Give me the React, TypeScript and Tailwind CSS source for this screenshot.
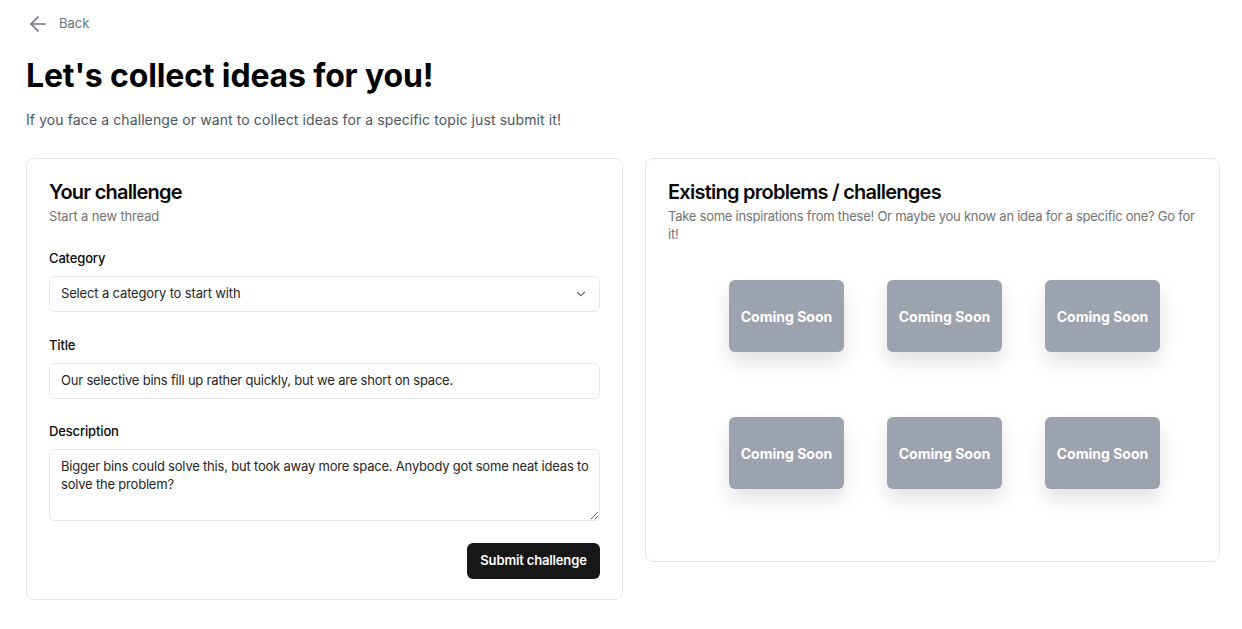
import React from "react";

function Tile() {
  return (
    <div className="flex h-[72px] w-[115px] items-center justify-center rounded-md bg-[#9ca3af] shadow-[0_10px_20px_rgba(0,0,0,0.12)]">
      <span className="text-[14px] font-bold text-white">Coming Soon</span>
    </div>
  );
}

export default function App() {
  return (
    <div
      className="min-h-screen bg-white pl-[26px] pr-[22px] text-[#0a0a0a]"
      style={{ fontFamily: "Inter, 'Noto Sans', sans-serif" }}
    >
      <div className="flex h-[48px] items-center gap-[9px] text-[13px] text-[#6b7280]">
        <svg width="24" height="24" viewBox="0 0 24 24" fill="none" stroke="#6b7280" strokeWidth="1.7" strokeLinecap="round" strokeLinejoin="round">
          <path d="M19 12H5" />
          <path d="M12 19l-7-7 7-7" />
        </svg>
        <span>Back</span>
      </div>
      <h1 className="mt-[4px] text-[32px] font-bold leading-[48px] tracking-[-0.15px] text-black">
        Let's collect ideas for you!
      </h1>
      <p className="mt-[10px] text-[14px] leading-[20px] tracking-[0.1px] text-[#4b5563]">
        If you face a challenge or want to collect ideas for a specific topic just submit it!
      </p>

      <div className="mt-[28px] flex items-start gap-[22px]">
        <div className="w-[597px] rounded-lg border border-[#e5e7eb] px-[22px] pb-[20px] pt-[21px] tracking-[-0.15px]">
          <h2 className="text-[20px] font-semibold leading-[24px] tracking-[-0.8px]">Your challenge</h2>
          <p className="mt-[3px] text-[13px] leading-[18px] text-[#737373]">Start a new thread</p>

          <div className="mt-[24px] text-[13px] font-medium leading-[18px]">Category</div>
          <div className="mt-[9px] flex h-[36px] items-center justify-between rounded-md border border-[#e5e7eb] px-[11px] text-[13px] text-[#262626]">
            <span>Select a category to start with</span>
            <svg width="14" height="14" viewBox="0 0 24 24" fill="none" stroke="#737373" strokeWidth="2" strokeLinecap="round" strokeLinejoin="round">
              <path d="M6 9l6 6 6-6" />
            </svg>
          </div>

          <div className="mt-[24px] text-[13px] font-medium leading-[18px]">Title</div>
          <div className="mt-[9px] flex h-[36px] items-center rounded-md border border-[#e5e7eb] px-[11px] text-[13px] tracking-[-0.2px] text-[#262626]">
            Our selective bins fill up rather quickly, but we are short on space.
          </div>

          <div className="mt-[23px] text-[13px] font-medium leading-[18px]">Description</div>
          <textarea
            className="mt-[9px] block h-[72px] w-full resize-y rounded-md border border-[#e5e7eb] py-[7px] pl-[11px] pr-[6px] text-[13px] leading-[18px] tracking-[-0.2px] text-[#262626] outline-none"
            style={{ fontFamily: "Inter, 'Noto Sans', sans-serif" }}
            defaultValue="Bigger bins could solve this, but took away more space. Anybody got some neat ideas to solve the problem?"
          />

          <div className="mt-[22px] flex justify-end">
            <button className="h-[36px] w-[133px] rounded-md bg-[#171717] text-[13px] font-semibold text-white">
              Submit challenge
            </button>
          </div>
        </div>

        <div className="w-[575px] rounded-lg border border-[#e5e7eb] pb-[20px] pl-[22px] pr-[20px] pt-[21px] tracking-[-0.15px]">
          <h2 className="text-[20px] font-semibold leading-[24px] tracking-[-0.75px]">Existing problems / challenges</h2>
          <p className="mt-[3px] text-[13px] leading-[18px] tracking-[-0.25px] text-[#737373]">
            Take some inspirations from these! Or maybe you know an idea for a specific one? Go for it!
          </p>
          <div className="mb-[52px] mt-[37px] grid grid-cols-[115px_115px_115px] gap-x-[43px] gap-y-[65px] pl-[61px] tracking-normal">
            <Tile />
            <Tile />
            <Tile />
            <Tile />
            <Tile />
            <Tile />
          </div>
        </div>
      </div>
    </div>
  );
}
